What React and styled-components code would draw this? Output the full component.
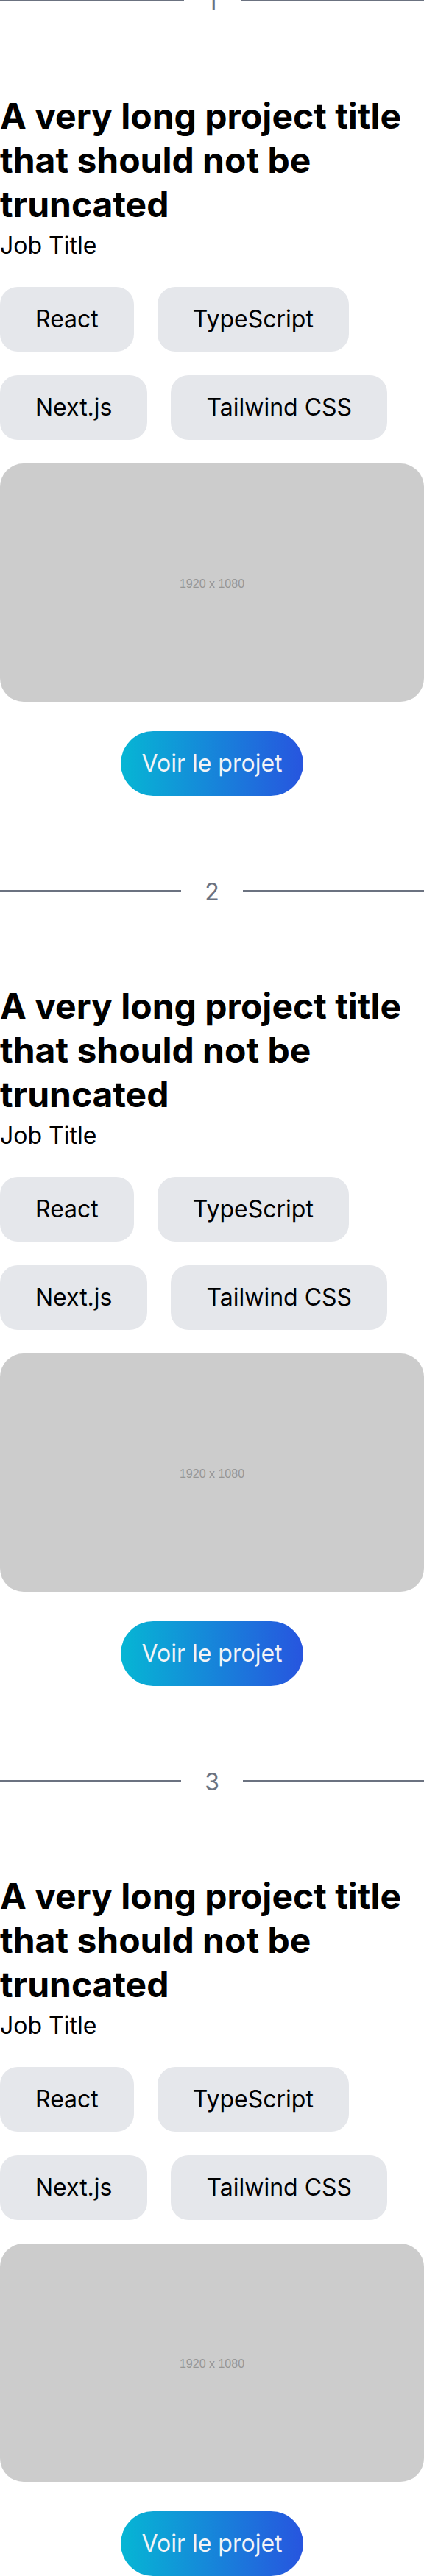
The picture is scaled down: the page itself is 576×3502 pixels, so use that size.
import React from "react";
import styled, { createGlobalStyle } from "styled-components";

const GlobalStyle = createGlobalStyle`
  *, *::before, *::after { box-sizing: border-box; }
  body {
    margin: 0;
    background: #ffffff;
    color: #000000;
    font-family: Inter, "Liberation Sans", sans-serif;
    font-size: 32px;
    font-weight: 400;
    line-height: 48px;
  }
`;

/* The first divider is half out of view, so the list starts above the page edge. */
const ProjectList = styled.main`
  display: flex;
  flex-direction: column;
  gap: 103px;
  margin-top: -25px;
`;

const Project = styled.article`
  display: flex;
  flex-direction: column;
`;

const Divider = styled.div`
  display: flex;
  align-items: center;
  gap: 32px;
  margin-bottom: 101px;
  color: #6b7280;

  &::before,
  &::after {
    content: "";
    flex: 1;
    height: 2px;
    background: currentColor;
  }
`;

const DividerNumber = styled.span`
  padding-top: 4px;
`;

const Title = styled.h2`
  margin: 0 0 2px;
  font-size: 48px;
  line-height: 60px;
  font-weight: 700;
`;

const Role = styled.p`
  margin: 0 0 32px;
`;

const Tags = styled.ul`
  display: flex;
  flex-wrap: wrap;
  gap: 32px;
  margin: 0 0 32px;
  padding: 0;
  list-style: none;
`;

const Tag = styled.li`
  padding: 20px 48px;
  border-radius: 24px;
  background: #e5e7eb;
`;

const Preview = styled.div`
  display: flex;
  align-items: center;
  justify-content: center;
  aspect-ratio: 16 / 9;
  padding-top: 4px;
  border-radius: 32px;
  background: #cccccc;
  color: #969696;
  font-family: "Liberation Sans", Arial, sans-serif;
  font-size: 16px;
  line-height: 20px;
`;

const ProjectLink = styled.a`
  align-self: center;
  margin-top: 40px;
  padding: 20px 28px;
  border-radius: 44px;
  background: linear-gradient(to right, #06b6d4, #2755df);
  color: #f3f4f6;
  text-decoration: none;
`;

const tags = ["React", "TypeScript", "Next.js", "Tailwind CSS"];
const projects = [1, 2, 3].map((number) => ({
  number,
  title: "A very long project title that should not be truncated",
  role: "Job Title",
  tags,
}));

export default function App() {
  return (
    <>
      <GlobalStyle />
      <ProjectList>
        {projects.map((project) => (
          <Project key={project.number}>
            <Divider>
              <DividerNumber>{project.number}</DividerNumber>
            </Divider>
            <Title>{project.title}</Title>
            <Role>{project.role}</Role>
            <Tags>
              {project.tags.map((tag) => (
                <Tag key={tag}>{tag}</Tag>
              ))}
            </Tags>
            <Preview>1920 x 1080</Preview>
            <ProjectLink href="#">Voir le projet</ProjectLink>
          </Project>
        ))}
      </ProjectList>
    </>
  );
}
